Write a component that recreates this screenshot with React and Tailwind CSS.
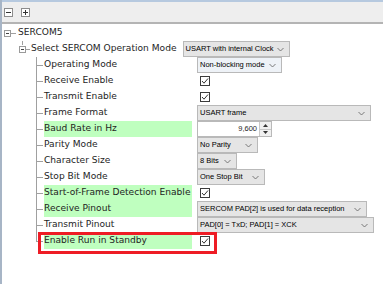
import React from "react";

const green = "bg-[#bfffbf]";

function Chevron() {
  return (
    <svg width="7" height="5" viewBox="0 0 7 5" className="shrink-0 ml-[3px]">
      <polyline points="0.5,1 3.5,4 6.5,1" fill="none" stroke="#6b6b6b" strokeWidth="0.9" />
    </svg>
  );
}

function Dropdown({ text, width, light }) {
  return (
    <div
      className={`h-[16px] flex items-center justify-between pl-[2px] pr-[5px] border border-[#b9b9b9] ${
        light ? "bg-[#eef2f7]" : "bg-[#e5e5e5]"
      } text-[7.5px] text-black font-['Liberation_Sans',Arial,sans-serif] leading-none whitespace-nowrap`}
      style={{ width }}
    >
      <span>{text}</span>
      <Chevron />
    </div>
  );
}

function Checkbox() {
  return (
    <div className="ml-[3px] w-[10px] h-[10px] border border-[#3c3c3c] bg-white flex items-center justify-center">
      <svg width="8" height="8" viewBox="0 0 8 8">
        <polyline points="1,4 3,6.2 7,1.5" fill="none" stroke="#333" strokeWidth="1" />
      </svg>
    </div>
  );
}

function Spinner() {
  return (
    <div className="h-[16px] w-[75px] flex border border-[#b9b9b9] bg-white text-[7.5px] font-['Liberation_Sans',Arial,sans-serif] leading-none">
      <div className="flex-1 flex items-center justify-end pr-[2px]">9,600</div>
      <div className="w-[12px] flex flex-col border-l border-[#c8c8c8] bg-[#f0f0f0]">
        <div className="flex-1 flex items-center justify-center border-b border-[#c8c8c8]">
          <svg width="5" height="3" viewBox="0 0 5 3">
            <polygon points="0,3 2.5,0 5,3" fill="#333" />
          </svg>
        </div>
        <div className="flex-1 flex items-center justify-center">
          <svg width="5" height="3" viewBox="0 0 5 3">
            <polygon points="0,0 2.5,3 5,0" fill="#333" />
          </svg>
        </div>
      </div>
    </div>
  );
}

function TreeBox() {
  return (
    <div className="w-[7px] h-[7px] border border-[#9a9a9a] bg-white relative">
      <div className="absolute left-[1px] right-[1px] top-[2px] h-px bg-[#444]" />
    </div>
  );
}

function ChildRow({ label, hl, last, children }) {
  return (
    <div className="h-[16px] flex items-center">
      <div className="relative w-[42px] h-full shrink-0">
        <div className={`absolute left-[34px] top-0 w-px bg-[#a0a0a0] ${last ? "h-[8px]" : "h-full"}`} />
        <div className="absolute left-[34px] top-[8px] w-[7px] h-px bg-[#a0a0a0]" />
      </div>
      <div className={`w-[148px] h-full flex items-center ${hl ? green : ""}`}>{label}</div>
      <div className="w-[5px]" />
      {children}
    </div>
  );
}

export default function App() {
  const rows = [
    { label: "Operating Mode", ctl: <Dropdown text="Non-blocking mode" width={85} light /> },
    { label: "Receive Enable", ctl: <Checkbox /> },
    { label: "Transmit Enable", ctl: <Checkbox /> },
    { label: "Frame Format", ctl: <Dropdown text="USART frame" width={174} /> },
    { label: "Baud Rate in Hz", hl: true, ctl: <Spinner /> },
    { label: "Parity Mode", ctl: <Dropdown text="No Parity" width={61} /> },
    { label: "Character Size", ctl: <Dropdown text="8 Bits" width={40} /> },
    { label: "Stop Bit Mode", ctl: <Dropdown text="One Stop Bit" width={68} /> },
    { label: "Start-of-Frame Detection Enable", hl: true, ctl: <Checkbox /> },
    { label: "Receive Pinout", hl: true, ctl: <Dropdown text="SERCOM PAD[2] is used for data reception" width={170} /> },
    { label: "Transmit Pinout", ctl: <Dropdown text="PAD[0] = TxD; PAD[1] = XCK" width={177} /> },
  ];

  return (
    <div className="w-[389px] h-[284px] bg-white overflow-hidden font-['DejaVu_Sans',Verdana,sans-serif] text-[9.1px] text-[#1e1e1e] leading-none">
      <div className="w-[383px] h-full border-l-2 border-[#a7b5c6]">
        <div className="h-[24px] border-t-2 border-t-[#b6c9df] border-b-2 border-b-[#b4b4b4] bg-[#eeeeee] flex items-center gap-[4px] pl-[2px]">
          <div className="w-[9px] h-[9px] border border-[#8c8c8c] bg-white relative">
            <div className="absolute left-[1px] right-[1px] top-[3px] h-px bg-[#333]" />
          </div>
          <div className="ml-[4px] w-[9px] h-[9px] border border-[#8c8c8c] bg-white relative">
            <div className="absolute left-[1px] right-[1px] top-[3px] h-px bg-[#333]" />
            <div className="absolute top-[1px] bottom-[1px] left-[3px] w-px bg-[#333]" />
          </div>
        </div>

        <div className="pt-px">
          <div className="h-[16px] flex items-center">
            <div className="w-[2px]" />
            <TreeBox />
            <div className="w-[5px] h-px bg-[#a0a0a0]" />
            <span className="ml-[2px]">SERCOM5</span>
          </div>

          <div className="h-[16px] flex items-center relative">
            <div className="absolute left-[20px] top-0 h-[4px] w-px bg-[#a0a0a0]" />
            <div className="w-[17px]" />
            <TreeBox />
            <div className="w-[4px] h-px bg-[#a0a0a0]" />
            <span className="ml-[1px]">Select SERCOM Operation Mode</span>
            <div className="ml-[6px]">
              <Dropdown text="USART with internal Clock" width={107} />
            </div>
          </div>

          {rows.map((r) => (
            <ChildRow key={r.label} label={r.label} hl={r.hl}>
              {r.ctl}
            </ChildRow>
          ))}

          <div className="relative">
            <ChildRow label="Enable Run in Standby" hl last>
              <Checkbox />
            </ChildRow>
            <div className="absolute left-[36px] top-[-1px] w-[179px] h-[22px] border-[3px] border-[#ee1c25]" />
          </div>
        </div>
      </div>
    </div>
  );
}
